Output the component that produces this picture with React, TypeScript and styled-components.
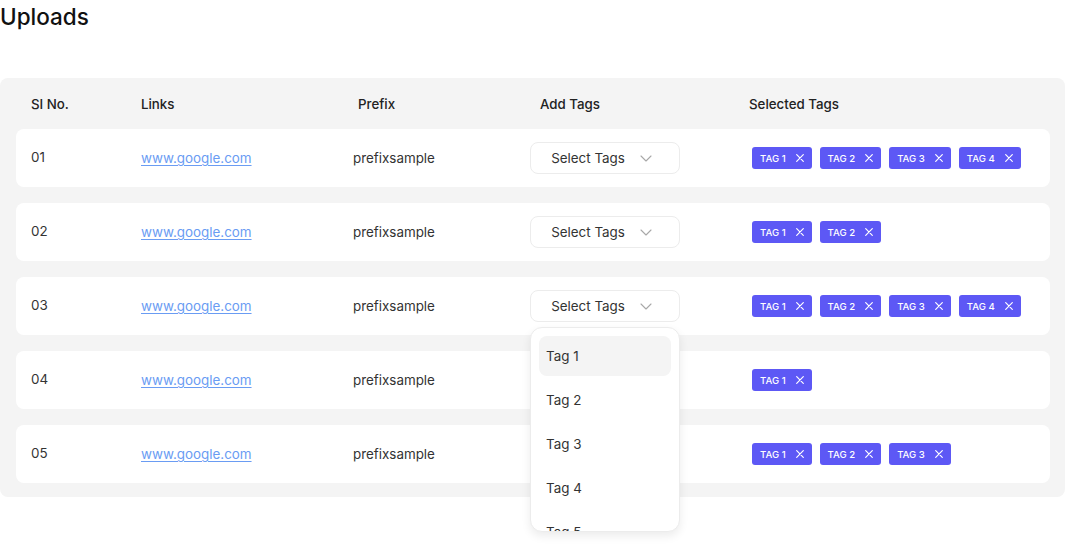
import React from "react";
import styled, { createGlobalStyle } from "styled-components";

const GlobalStyle = createGlobalStyle`
  html, body { margin: 0; padding: 0; background: #fff; }
  body { font-family: Inter, "Noto Sans", Arial, sans-serif; color: #222; }
  * { box-sizing: border-box; }
`;

const Page = styled.div`
  width: 1065px;
  min-height: 559px;
`;

const Title = styled.h1`
  margin: 0;
  font-size: 22.5px;
  line-height: 34px;
  font-weight: 500;
  color: #111;
`;

const Panel = styled.div`
  margin-top: 44px;
  background: #f4f4f4;
  border-radius: 8px;
  padding: 0 15px 14px 16px;
`;

const HeaderRow = styled.div`
  display: grid;
  grid-template-columns: 110px 217px 182px 209px 1fr;
  padding: 17px 0 16px 15px;
  font-size: 13.3px;
  line-height: 18px;
  font-weight: 500;
  color: #222;
`;

const Rows = styled.div`
  display: flex;
  flex-direction: column;
  gap: 16px;
`;

const Row = styled.div`
  position: relative;
  display: grid;
  grid-template-columns: 110px 212px 177px 221px 1fr;
  align-items: center;
  height: 58px;
  padding-left: 15px;
  background: #fff;
  border-radius: 8px;
  font-size: 13.4px;
  color: #333;
`;

const Cell = styled.div<{ $nudge?: number }>`
  position: relative;
  margin-top: ${(p) => p.$nudge ?? 0}px;
`;

const Link = styled.a`
  color: #6a9cf3;
  text-decoration: underline;
  text-underline-offset: 2px;
`;

const SelectButton = styled.button`
  width: 150px;
  height: 32px;
  display: flex;
  align-items: center;
  justify-content: center;
  gap: 15px;
  background: #fff;
  border: 1px solid #ececec;
  border-radius: 8px;
  font-family: inherit;
  font-size: 13.4px;
  color: #333;
  padding: 0 7px 0 0;
  cursor: pointer;
`;

const Dropdown = styled.div`
  position: absolute;
  top: 37px;
  left: 0;
  width: 150px;
  height: 205px;
  background: #fff;
  border: 1px solid #ececec;
  border-radius: 12px;
  box-shadow: 0 4px 10px rgba(0, 0, 0, 0.08);
  padding: 8px;
  overflow: hidden;
  z-index: 10;
  display: flex;
  flex-direction: column;
  gap: 4px;
`;

const Option = styled.div<{ $active?: boolean }>`
  flex: 0 0 40px;
  display: flex;
  align-items: center;
  padding-left: 7px;
  border-radius: 8px;
  font-size: 13.4px;
  color: #333;
  background: ${(p) => (p.$active ? "#f4f4f4" : "transparent")};
`;

const TagList = styled.div`
  display: flex;
  gap: 8px;
  padding-left: 1px;
`;

const Tag = styled.span`
  display: inline-flex;
  align-items: center;
  gap: 10px;
  height: 22px;
  padding: 0 8px;
  background: #5d58f5;
  color: #fff;
  border-radius: 3px;
  font-size: 9.6px;
  font-weight: 500;
`;

const Chevron = () => (
  <svg width="12" height="7" viewBox="0 0 12 7" fill="none">
    <path d="M1 1l5 5 5-5" stroke="#a8a8a8" strokeWidth="1.1" strokeLinecap="round" strokeLinejoin="round" />
  </svg>
);

const Close = () => (
  <svg width="8" height="8" viewBox="0 0 8 8" fill="none">
    <path d="M0.7 0.7l6.6 6.6M7.3 0.7L0.7 7.3" stroke="#fff" strokeWidth="1.2" strokeLinecap="round" />
  </svg>
);

const data = [
  { no: "01", tags: 4, select: true, open: false },
  { no: "02", tags: 2, select: true, open: false },
  { no: "03", tags: 4, select: true, open: true },
  { no: "04", tags: 1, select: false, open: false },
  { no: "05", tags: 3, select: false, open: false },
];

export default function App() {
  return (
    <Page>
      <GlobalStyle />
      <Title>Uploads</Title>
      <Panel>
        <HeaderRow>
          <div>SI No.</div>
          <div>Links</div>
          <div>Prefix</div>
          <div>Add Tags</div>
          <div>Selected Tags</div>
        </HeaderRow>
        <Rows>
          {data.map((r) => (
            <Row key={r.no}>
              <Cell $nudge={-2}>{r.no}</Cell>
              <Cell>
                <Link href="#">www.google.com</Link>
              </Cell>
              <Cell>prefixsample</Cell>
              <Cell>
                {r.select && (
                  <SelectButton>
                    <span>Select Tags</span>
                    <Chevron />
                  </SelectButton>
                )}
                {r.open && (
                  <Dropdown>
                    {[1, 2, 3, 4, 5].map((n) => (
                      <Option key={n} $active={n === 1}>
                        Tag {n}
                      </Option>
                    ))}
                  </Dropdown>
                )}
              </Cell>
              <Cell>
                <TagList>
                  {Array.from({ length: r.tags }, (_, i) => (
                    <Tag key={i}>
                      TAG {i + 1}
                      <Close />
                    </Tag>
                  ))}
                </TagList>
              </Cell>
            </Row>
          ))}
        </Rows>
      </Panel>
    </Page>
  );
}
